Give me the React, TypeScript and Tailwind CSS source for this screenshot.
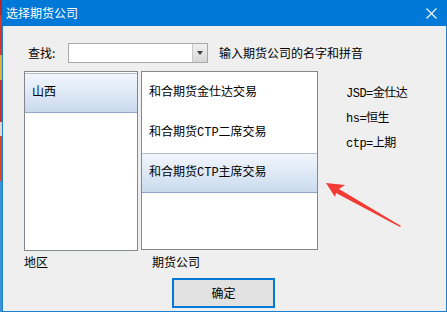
import React from 'react'

const cjk = { fontFamily: '"Noto Sans CJK SC", "Noto Sans", sans-serif' }
const mixed = { fontFamily: '"Liberation Mono", "Noto Sans CJK SC", monospace' }

// one row of a list box; selected rows get the pale blue gradient
const ListItem: React.FC<{ text: string; selected?: boolean }> = ({ text, selected }) => (
  <div
    className={
      selected
        ? 'h-[40px] flex items-center pl-[7px] text-[12px] text-black bg-gradient-to-b from-[#f2f6fc] to-[#c9daee] border-t border-t-[#b3bdcc] border-b border-b-[#8fa6c9]'
        : 'h-[40px] flex items-center pl-[7px] text-[12px] text-black'
    }
    style={mixed}
  >
    {text}
  </div>
)

const ArrowMark: React.FC = () => (
  <svg className="absolute left-[320px] top-[180px]" width="82" height="50" viewBox="0 0 82 50">
    <polygon points="3,3 22,5 16,9 78,46 77,47 13,13 12,17" fill="#f23b33" />
  </svg>
)

export default function App() {
  return (
    <div className="w-[447px] h-[312px] flex bg-[#efefef] overflow-hidden" style={cjk}>
      {/* desktop peeking out on the left */}
      <div className="w-[2px] h-full flex flex-col">
        <div className="h-[15px] bg-[#b8262a]" />
        <div className="h-[40px] bg-[#d2382c]" />
        <div className="h-[25px] bg-[#e2b03a]" />
        <div className="h-[42px] bg-[#c8352a]" />
        <div className="h-[14px] bg-[#e9d6c8]" />
        <div className="h-[45px] bg-[#d9482c]" />
        <div className="flex-1 bg-[#3d8fd8]" />
      </div>

      <div className="flex-1 flex flex-col border-l border-r border-b border-[#1a7fd4] relative">
        {/* title bar */}
        <div className="h-[26px] bg-[#0078d7] flex items-center justify-between pl-[4px] pr-[10px] -ml-px -mr-px">
          <span className="text-[12px] text-white">选择期货公司</span>
          <svg width="11" height="11" viewBox="0 0 11 11">
            <path d="M0.5 0.5 L10.5 10.5 M10.5 0.5 L0.5 10.5" stroke="#fff" strokeWidth="1.1" />
          </svg>
        </div>

        {/* search row */}
        <div className="flex items-center mt-[17px] h-[20px]">
          <span className="ml-[25px] w-[40px] text-[12px] text-black">查找:</span>
          <div className="w-[140px] h-[20px] bg-white border border-[#a9a9a9] flex justify-end">
            <div className="w-[15px] h-full bg-gradient-to-b from-[#f0f0f0] to-[#d8d8d8] border-l border-[#c8c8c8] flex items-center justify-center">
              <div className="w-0 h-0 border-l-[3px] border-r-[3px] border-t-[4px] border-l-transparent border-r-transparent border-t-[#404040]" />
            </div>
          </div>
          <span className="ml-[11px] text-[12px] text-black">输入期货公司的名字和拼音</span>
        </div>

        {/* lists */}
        <div className="flex mt-[8px] ml-[21px]">
          <div className="w-[114px] h-[180px] bg-white border border-[#828790] pt-[1px]">
            <ListItem text="山西" selected />
          </div>
          <div className="w-[177px] h-[179px] ml-[3px] bg-white border border-[#828790] pt-[1px]">
            <ListItem text="和合期货金仕达交易" />
            <ListItem text="和合期货CTP二席交易" />
            <ListItem text="和合期货CTP主席交易" selected />
          </div>
          <div className="ml-[28px] pt-[16px] flex flex-col gap-[10px] text-[12px] text-black" style={mixed}>
            <span className="h-[15px] leading-[15px] tracking-[-0.5px]">JSD=金仕达</span>
            <span className="h-[15px] leading-[15px] tracking-[-0.5px]">hs=恒生</span>
            <span className="h-[15px] leading-[15px] tracking-[-0.5px]">ctp=上期</span>
          </div>
        </div>

        {/* labels */}
        <div className="flex mt-[2px] text-[12px] text-black h-[18px] items-center">
          <span className="ml-[21px] w-[128px]">地区</span>
          <span>期货公司</span>
        </div>

        {/* ok button */}
        <div className="flex mt-[7px] ml-[169px]">
          <button className="w-[103px] h-[30px] bg-[#e1e1e1] border-2 border-[#0078d7] text-[12px] text-black">
            确定
          </button>
        </div>

        <ArrowMark />
      </div>
    </div>
  )
}
